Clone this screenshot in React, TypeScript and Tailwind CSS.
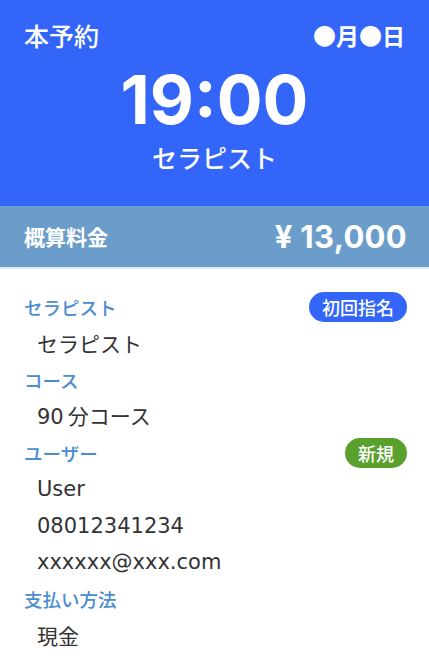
const JP = { fontFamily: '"Noto Sans CJK JP", "Noto Sans", sans-serif' };
const LATIN = { fontFamily: '"DejaVu Sans", "Noto Sans CJK JP", sans-serif' };

function Row({ children }: { children: React.ReactNode }) {
  return <div className="h-[36.5px] flex items-center justify-between">{children}</div>;
}

function Label({ text }: { text: string }) {
  return <span className="text-[18.5px] font-medium text-[#4b8dcf] leading-none">{text}</span>;
}

function Value({ children, latin = false }: { children: React.ReactNode; latin?: boolean }) {
  return (
    <span className="pl-[13px] text-[21px] text-[#333333] leading-none" style={latin ? LATIN : undefined}>
      {children}
    </span>
  );
}

function Badge({ text, color }: { text: string; color: string }) {
  return (
    <span className={`h-[30px] px-[13px] -mr-[2px] rounded-full flex items-center text-white text-[18px] font-medium leading-none ${color}`}>
      {text}
    </span>
  );
}

export default function App() {
  return (
    <div className="w-[429px] h-[668px] bg-white overflow-hidden" style={JP}>
      {/* Header */}
      <div className="h-[206px] bg-[#3366f8] text-white px-[24px] pt-[20px] flex flex-col">
        <div className="h-[30px] flex items-center justify-between">
          <span className="text-[25px] font-medium leading-none">本予約</span>
          <span className="text-[23px] font-bold leading-none">●月●日</span>
        </div>
        <div className="mt-[15px] text-center text-[68px] font-bold leading-none" style={{ fontFamily: "Inter, sans-serif" }}>
          19:00
        </div>
        <div className="mt-[12px] text-center text-[25px] font-medium leading-none">セラピスト</div>
      </div>

      {/* Estimated price */}
      <div className="h-[63px] bg-[#6b9dcb] text-white pl-[24px] pr-[22px] flex items-center justify-between border-b-2 border-[#e6e9ee]">
        <span className="text-[21px] font-bold leading-none">概算料金</span>
        <span className="flex items-center text-[31px] font-bold leading-none" style={{ fontFamily: "Inter, sans-serif" }}>
          <span className="mr-[8px]">¥</span>
          <span className="tracking-[0.3px]">13,000</span>
        </span>
      </div>

      {/* Details */}
      <div className="px-[24px] pt-[20px] flex flex-col">
        <Row>
          <Label text="セラピスト" />
          <Badge text="初回指名" color="bg-[#3366f8]" />
        </Row>
        <Row><Value>セラピスト</Value></Row>
        <Row><Label text="コース" /></Row>
        <Row>
          <Value>
            <span className="mr-[4px]" style={LATIN}>90</span>分コース
          </Value>
        </Row>
        <Row>
          <Label text="ユーザー" />
          <Badge text="新規" color="bg-[#5aa02c]" />
        </Row>
        <Row><Value latin>User</Value></Row>
        <Row><Value latin>08012341234</Value></Row>
        <Row><Value latin>xxxxxx@xxx.com</Value></Row>
        <Row><Label text="支払い方法" /></Row>
        <Row><Value>現金</Value></Row>
      </div>
    </div>
  );
}
